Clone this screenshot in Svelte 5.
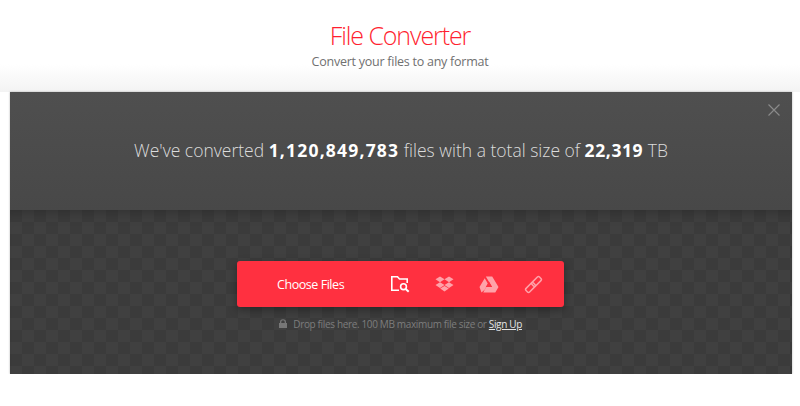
<script>
  const total = "1,120,849,783";
  const size = "22,319";
</script>

<header class="head">
  <h1>File Converter</h1>
  <p>Convert your files to any format</p>
</header>

<main class="panel">
  <section class="stats">
    <button class="close" aria-label="Close">
      <svg width="12" height="12" viewBox="0 0 12 12"><path d="M.5.5l11 11M11.500.5l-11 11" stroke="#8a8a8a" stroke-width="1.2" fill="none" /></svg>
    </button>
    <p>We've converted <b class="wide">{total}</b> files with a total size of <b>{size}</b> TB</p>
  </section>

  <section class="drop">
    <div class="picker">
      <span class="label">Choose Files</span>
      <div class="sources">
        <svg class="on" width="20" height="18" viewBox="0 0 20 18" fill="none" stroke="#fff" stroke-width="1.6">
          <path d="M9 15.200H1.800V1.800H7.500L9.500 4H17.200V8" />
          <circle cx="13.500" cy="11.700" r="2.900" />
          <path d="M15.700 13.900L18.700 16.700" stroke-width="2" />
        </svg>
        <svg width="19" height="16" viewBox="0 0 19 16" fill="#fff">
          <path d="M5 .5L9.500 3.300 5 6.200.5 3.300zM14 .5l4.500 2.800L14 6.200 9.500 3.300zM5 6.200L9.500 9 5 11.900.5 9zM14 6.200L18.500 9 14 11.900 9.500 9zM5.200 12.600L9.500 10l4.300 2.600-4.300 2.900z" />
        </svg>
        <svg width="20" height="17" viewBox="0 0 20 17" fill="#fff">
          <path d="M6.800.5h6.400l6.300 10.600h-6.400zM5.700 2.300l3.200 5.500-3.300 5.900-3.100 2.700L.5 11.100zM7.300 11.100h12.200L16.300 16.500H4.200z" />
          <path d="M6.800 11.100L10 5.500l3.100 5.600z" fill="#ff3040" />
        </svg>
        <svg width="19" height="19" viewBox="0 0 19 19" fill="none" stroke="#fff" stroke-width="1.500">
          <g transform="rotate(-45 9.500 9.500)">
            <rect x="0" y="7" width="10.500" height="5" rx="1.500" />
            <rect x="8.500" y="7" width="10.500" height="5" rx="1.500" />
          </g>
        </svg>
      </div>
    </div>
    <p class="hint">
      <svg width="8" height="9" viewBox="0 0 8 9"><path d="M1 4V2.800a3 2.600 0 0 1 6 0V4h1v5H0V4zm1.300 0h3.400V2.800a1.700 1.500 0 0 0-3.400 0z" fill="#777" /></svg>
      Drop files here. 100 MB maximum file size or <a href="#signup">Sign Up</a>
    </p>
  </section>
</main>

<style>
  :global(body) {
    background: #fff;
    font-family: "Open Sans", "Liberation Sans", sans-serif;
  }

  .head {
    height: 92px;
    box-sizing: border-box;
    padding-top: 19px;
    text-align: center;
    background: linear-gradient(#fff 70%, #f3f3f3);
  }

  h1 {
    margin: 0 0 2px;
    font-size: 25px;
    line-height: 32px;
    font-weight: 300;
    letter-spacing: -1.100px;
    color: #ff1f30;
  }

  .head p {
    margin: 0;
    font-size: 12.500px;
    line-height: 18px;
    font-weight: 400;
    letter-spacing: -0.250px;
    color: #707070;
  }

  .panel {
    margin: 0 8px 0 10px;
    height: 282px;
    display: flex;
    flex-direction: column;
    box-shadow: 0 0 2px rgba(0, 0, 0, 0.3);
  }

  .stats {
    position: relative;
    height: 118px;
    box-sizing: border-box;
    padding-top: 45px;
    background: linear-gradient(#4f4f4f, #484848);
    text-align: center;
  }

  .stats p {
    margin: 0;
    font-size: 17.500px;
    line-height: 26px;
    font-weight: 300;
    color: #dcdcdc;
  }

  .stats b {
    font-weight: 700;
    color: #fff;
    letter-spacing: 0.6px;
  }

  .stats b.wide {
    letter-spacing: 1.2px;
  }

  .close {
    position: absolute;
    top: 12px;
    right: 12px;
    padding: 0;
    border: 0;
    background: none;
    line-height: 0;
  }

  .drop {
    flex: 1;
    display: flex;
    flex-direction: column;
    align-items: center;
    padding-top: 51px;
    padding-right: 1px;
    background-color: #3b3b3b;
    background-image:
      linear-gradient(45deg, #404040 25%, transparent 25%, transparent 75%, #404040 75%),
      linear-gradient(45deg, #404040 25%, transparent 25%, transparent 75%, #404040 75%);
    background-size: 24px 24px;
    background-position: 0 0, 12px 12px;
    box-shadow: inset 0 14px 14px -12px rgba(0, 0, 0, 0.25);
  }

  .picker {
    width: 327px;
    height: 46px;
    display: flex;
    align-items: center;
    border-radius: 3px;
    background: #ff3040;
    box-shadow: 0 3px 8px rgba(0, 0, 0, 0.35);
  }

  .label {
    width: 144px;
    padding-left: 40px;
    box-sizing: border-box;
    font-size: 12.500px;
    font-weight: 500;
    letter-spacing: -0.450px;
    color: #fff;
  }

  .sources {
    display: flex;
    align-items: center;
    gap: 25px;
    margin-left: 9px;
  }

  .sources svg {
    opacity: 0.55;
  }

  .sources svg.on {
    opacity: 1;
  }

  .hint {
    margin: 10px 0 0;
    font-size: 10px;
    line-height: 14px;
    letter-spacing: -0.350px;
    color: #7d7d7d;
  }

  .hint svg {
    margin-right: 4px;
  }

  .hint a {
    color: #e4e4e4;
  }
</style>
